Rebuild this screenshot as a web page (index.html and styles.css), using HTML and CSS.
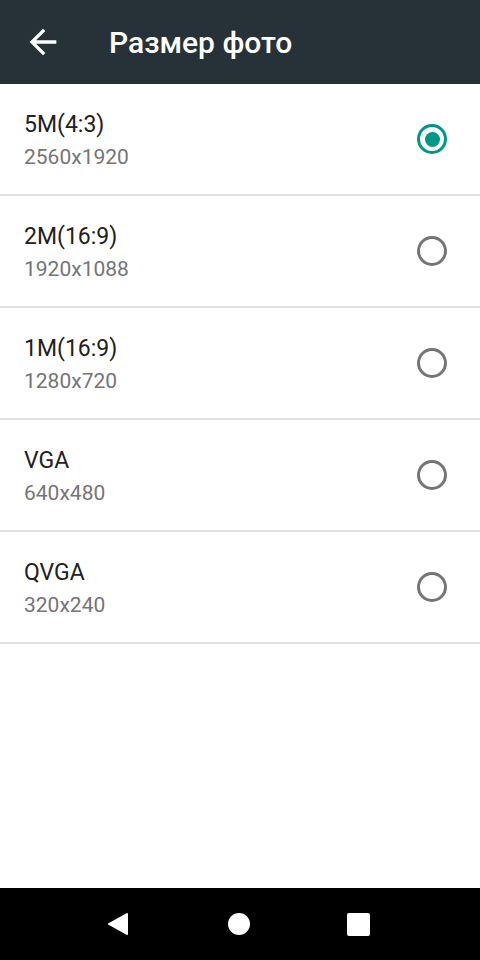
FILE: index.html
```html
<!DOCTYPE html>
<html>

<head>
    <title>Размер фото</title>
    <link rel="stylesheet" href="styles.css">
</head>

<body>
    <div class="screen">
        <div class="toolbar">
            <svg class="back" viewBox="0 0 24 24" width="40" height="40">
                <path d="M20 11H7.83l5.59-5.59L12 4l-8 8 8 8 1.41-1.41L7.83 13H20v-2z" fill="#ffffff" />
            </svg>
            <div class="title">Размер фото</div>
        </div>

        <div class="list">
            <div class="item">
                <div class="text">
                    <div class="primary">5M(4:3)</div>
                    <div class="secondary">2560x1920</div>
                </div>
                <div class="radio checked"></div>
            </div>
            <div class="item">
                <div class="text">
                    <div class="primary">2M(16:9)</div>
                    <div class="secondary">1920x1088</div>
                </div>
                <div class="radio"></div>
            </div>
            <div class="item">
                <div class="text">
                    <div class="primary">1M(16:9)</div>
                    <div class="secondary">1280x720</div>
                </div>
                <div class="radio"></div>
            </div>
            <div class="item">
                <div class="text">
                    <div class="primary">VGA</div>
                    <div class="secondary">640x480</div>
                </div>
                <div class="radio"></div>
            </div>
            <div class="item">
                <div class="text">
                    <div class="primary">QVGA</div>
                    <div class="secondary">320x240</div>
                </div>
                <div class="radio"></div>
            </div>
        </div>

        <div class="navbar">
            <svg class="nav-back" viewBox="0 0 22 24" width="22" height="24">
                <path d="M20 2 L2 12 L20 22 Z" fill="#ffffff" stroke="#ffffff" stroke-width="2" stroke-linejoin="round" />
            </svg>
            <div class="nav-home"></div>
            <div class="nav-recent"></div>
        </div>
    </div>
</body>

</html>
```

FILE: styles.css
```css
body {
    margin: 0;
    font-family: Roboto, "Noto Sans", sans-serif;
    background-color: white;
}

.screen {
    display: flex;
    flex-direction: column;
    width: 480px;
    height: 960px;
}

.toolbar {
    display: flex;
    align-items: center;
    height: 84px;
    background-color: #263238;
    flex-shrink: 0;
}

.back {
    margin-left: 23px;
    margin-right: 46px;
}

.title {
    color: white;
    font-size: 30px;
    font-weight: 500;
}

.list {
    flex: 1;
}

.item {
    display: flex;
    justify-content: space-between;
    height: 110px;
    padding: 0 33px 0 24px;
    border-bottom: 2px solid #e0e0e0;
}

.text {
    margin-top: 26px;
}

.primary {
    font-size: 23px;
    line-height: 30px;
    color: #212121;
}

.secondary {
    margin-top: 2px;
    font-size: 21px;
    line-height: 30px;
    color: #757575;
}

.radio {
    align-self: center;
    box-sizing: border-box;
    width: 30px;
    height: 30px;
    border: 3px solid #757575;
    border-radius: 50%;
    display: flex;
    align-items: center;
    justify-content: center;
}

.radio.checked {
    border-color: #009688;
}

.radio.checked::after {
    content: "";
    width: 15px;
    height: 15px;
    border-radius: 50%;
    background-color: #009688;
}

.navbar {
    display: flex;
    align-items: center;
    gap: 99px;
    height: 72px;
    background-color: black;
    padding: 0 0 0 107px;
    flex-shrink: 0;
}

.nav-back {
    display: block;
}

.nav-home {
    width: 22px;
    height: 22px;
    border-radius: 50%;
    background-color: white;
}

.nav-recent {
    width: 23px;
    height: 23px;
    margin-left: -2px;
    border-radius: 2px;
    background-color: white;
}
```
